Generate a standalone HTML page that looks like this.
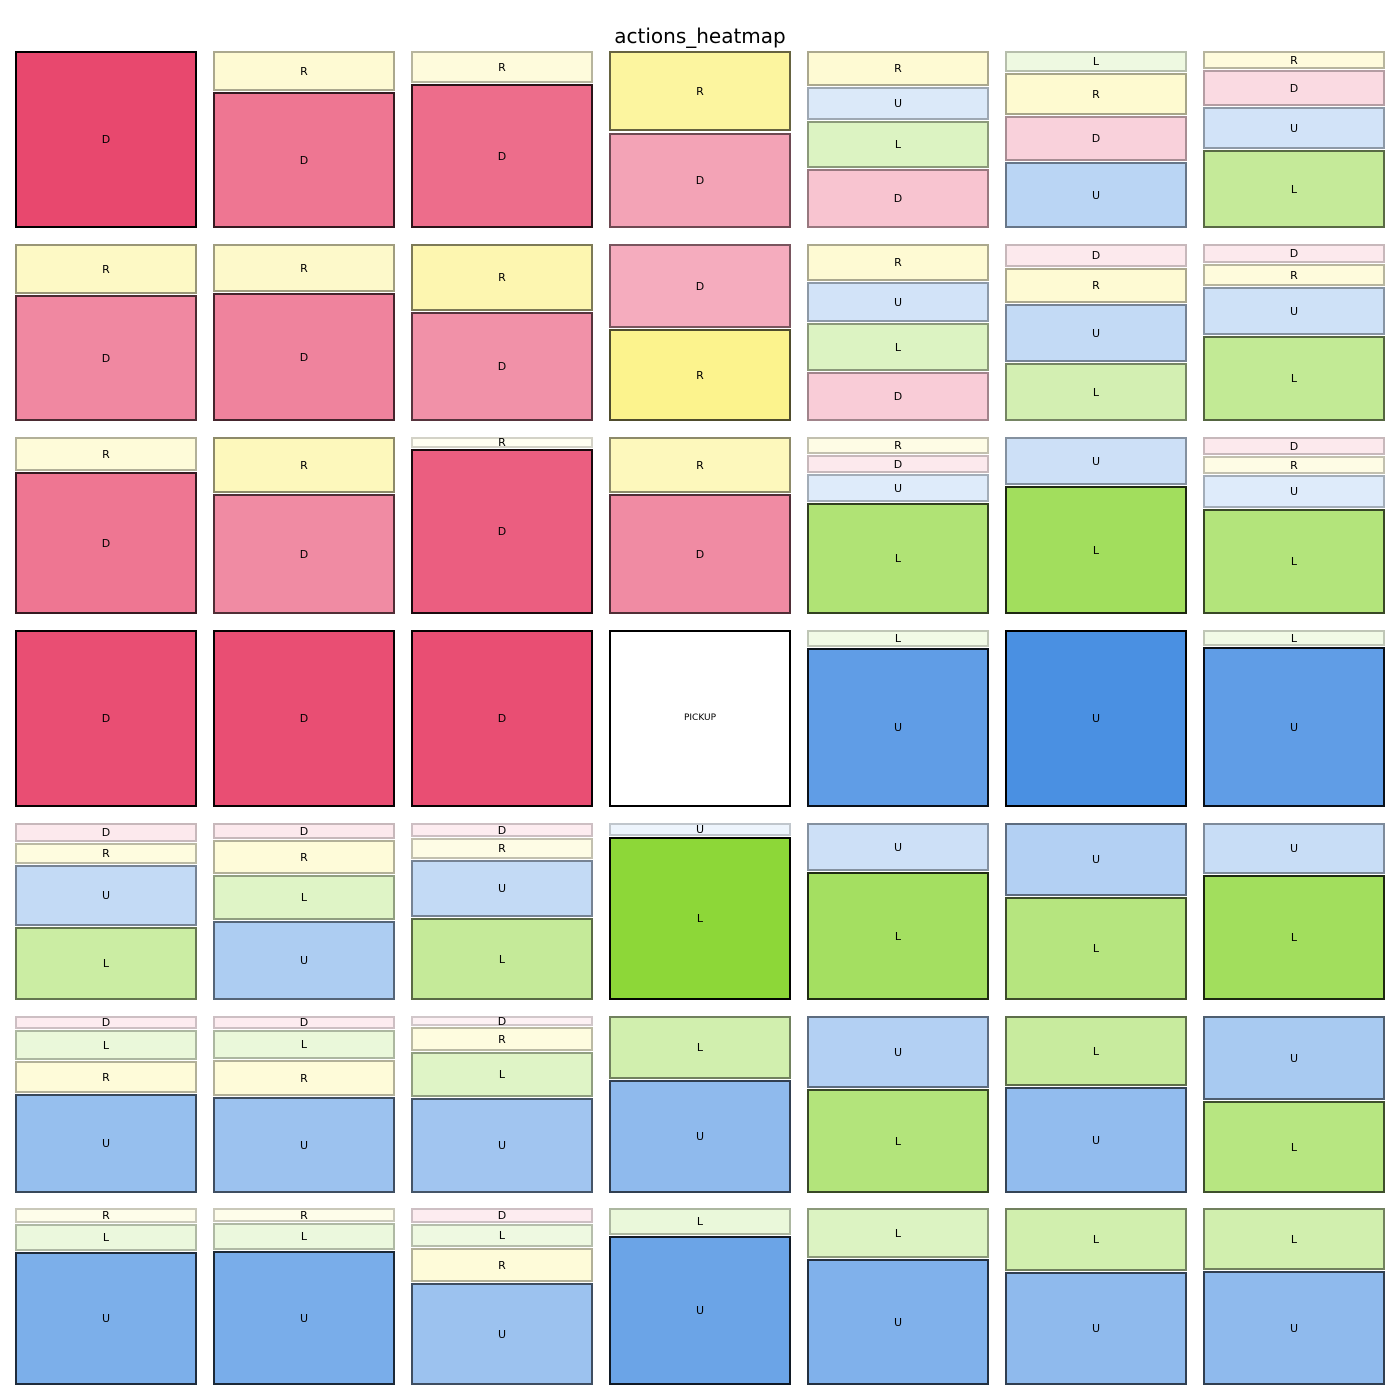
<!DOCTYPE html>
<html><head><meta charset="utf-8"><style>
body{margin:0;width:1400px;height:1400px;background:#fff;position:relative;overflow:hidden;font-family:"DejaVu Sans","Liberation Sans",sans-serif}
.t{position:absolute;left:0;width:1400px;top:24px;text-align:center;font-size:20px;color:#000}
.c{position:absolute;width:182px;height:177px}
.s{position:absolute;left:0;width:182px;box-sizing:border-box;border:2px solid rgba(0,0,0,calc(var(--a) * 0.9 + 0.1));background:rgba(var(--c),var(--a));display:flex;align-items:center;justify-content:center;font-size:11px;color:#000;overflow:visible;line-height:1}
.D{--c:232,72,110}.R{--c:250,236,80}.U{--c:74,144,226}.L{--c:139,214,52}
.P{--c:255,255,255;--a:1}
</style></head><body>
<div class="t">actions_heatmap</div>

<!-- row 0 -->
<div class="c" style="left:15px;top:51px"><div class="s D" style="top:0;height:177px;--a:1">D</div></div>
<div class="c" style="left:213px;top:51px"><div class="s R" style="top:0;height:40px;--a:.25">R</div><div class="s D" style="top:41px;height:136px;--a:.75">D</div></div>
<div class="c" style="left:411px;top:51px"><div class="s R" style="top:0;height:32px;--a:.2">R</div><div class="s D" style="top:33px;height:144px;--a:.8">D</div></div>
<div class="c" style="left:609px;top:51px"><div class="s R" style="top:0;height:80px;--a:.55">R</div><div class="s D" style="top:82px;height:95px;--a:.5">D</div></div>
<div class="c" style="left:807px;top:51px"><div class="s R" style="top:0;height:35px;--a:.25">R</div><div class="s U" style="top:36px;height:33px;--a:.2">U</div><div class="s L" style="top:70px;height:47px;--a:.3">L</div><div class="s D" style="top:118px;height:59px;--a:.32">D</div></div>
<div class="c" style="left:1005px;top:51px"><div class="s L" style="top:0;height:21px;--a:.15">L</div><div class="s R" style="top:22px;height:42px;--a:.27">R</div><div class="s D" style="top:65px;height:45px;--a:.25">D</div><div class="s U" style="top:111px;height:66px;--a:.38">U</div></div>
<div class="c" style="left:1203px;top:51px"><div class="s R" style="top:0;height:18px;--a:.2">R</div><div class="s D" style="top:19px;height:36px;--a:.2">D</div><div class="s U" style="top:56px;height:42px;--a:.25">U</div><div class="s L" style="top:99px;height:78px;--a:.5">L</div></div>

<!-- row 1 -->
<div class="c" style="left:15px;top:244px"><div class="s R" style="top:0;height:50px;--a:.33">R</div><div class="s D" style="top:51px;height:126px;--a:.65">D</div></div>
<div class="c" style="left:213px;top:244px"><div class="s R" style="top:0;height:48px;--a:.3">R</div><div class="s D" style="top:49px;height:128px;--a:.68">D</div></div>
<div class="c" style="left:411px;top:244px"><div class="s R" style="top:0;height:67px;--a:.45">R</div><div class="s D" style="top:68px;height:109px;--a:.6">D</div></div>
<div class="c" style="left:609px;top:244px"><div class="s D" style="top:0;height:84px;--a:.45">D</div><div class="s R" style="top:85px;height:92px;--a:.65">R</div></div>
<div class="c" style="left:807px;top:244px"><div class="s R" style="top:0;height:37px;--a:.25">R</div><div class="s U" style="top:38px;height:40px;--a:.25">U</div><div class="s L" style="top:79px;height:48px;--a:.3">L</div><div class="s D" style="top:128px;height:49px;--a:.28">D</div></div>
<div class="c" style="left:1005px;top:244px"><div class="s D" style="top:0;height:23px;--a:.12">D</div><div class="s R" style="top:24px;height:35px;--a:.25">R</div><div class="s U" style="top:60px;height:58px;--a:.33">U</div><div class="s L" style="top:119px;height:58px;--a:.38">L</div></div>
<div class="c" style="left:1203px;top:244px"><div class="s D" style="top:0;height:19px;--a:.12">D</div><div class="s R" style="top:20px;height:22px;--a:.2">R</div><div class="s U" style="top:43px;height:48px;--a:.27">U</div><div class="s L" style="top:92px;height:85px;--a:.52">L</div></div>

<!-- row 2 -->
<div class="c" style="left:15px;top:437px"><div class="s R" style="top:0;height:34px;--a:.22">R</div><div class="s D" style="top:35px;height:142px;--a:.75">D</div></div>
<div class="c" style="left:213px;top:437px"><div class="s R" style="top:0;height:56px;--a:.38">R</div><div class="s D" style="top:57px;height:120px;--a:.63">D</div></div>
<div class="c" style="left:411px;top:437px"><div class="s R" style="top:0;height:11px;--a:.08">R</div><div class="s D" style="top:12px;height:165px;--a:.88">D</div></div>
<div class="c" style="left:609px;top:437px"><div class="s R" style="top:0;height:56px;--a:.38">R</div><div class="s D" style="top:57px;height:120px;--a:.63">D</div></div>
<div class="c" style="left:807px;top:437px"><div class="s R" style="top:0;height:17px;--a:.15">R</div><div class="s D" style="top:18px;height:18px;--a:.12">D</div><div class="s U" style="top:37px;height:28px;--a:.18">U</div><div class="s L" style="top:66px;height:111px;--a:.68">L</div></div>
<div class="c" style="left:1005px;top:437px"><div class="s U" style="top:0;height:48px;--a:.28">U</div><div class="s L" style="top:49px;height:128px;--a:.8">L</div></div>
<div class="c" style="left:1203px;top:437px"><div class="s D" style="top:0;height:18px;--a:.12">D</div><div class="s R" style="top:19px;height:18px;--a:.15">R</div><div class="s U" style="top:38px;height:33px;--a:.18">U</div><div class="s L" style="top:72px;height:105px;--a:.65">L</div></div>

<!-- row 3 -->
<div class="c" style="left:15px;top:630px"><div class="s D" style="top:0;height:177px;--a:.97">D</div></div>
<div class="c" style="left:213px;top:630px"><div class="s D" style="top:0;height:177px;--a:.97">D</div></div>
<div class="c" style="left:411px;top:630px"><div class="s D" style="top:0;height:177px;--a:.97">D</div></div>
<div class="c" style="left:609px;top:630px"><div class="s P" style="top:0;height:177px;font-size:9px">PICKUP</div></div>
<div class="c" style="left:807px;top:630px"><div class="s L" style="top:0;height:17px;--a:.12">L</div><div class="s U" style="top:18px;height:159px;--a:.88">U</div></div>
<div class="c" style="left:1005px;top:630px"><div class="s U" style="top:0;height:177px;--a:1">U</div></div>
<div class="c" style="left:1203px;top:630px"><div class="s L" style="top:0;height:16px;--a:.12">L</div><div class="s U" style="top:17px;height:160px;--a:.88">U</div></div>

<!-- row 4 -->
<div class="c" style="left:15px;top:823px"><div class="s D" style="top:0;height:19px;--a:.12">D</div><div class="s R" style="top:20px;height:21px;--a:.18">R</div><div class="s U" style="top:42px;height:61px;--a:.33">U</div><div class="s L" style="top:104px;height:73px;--a:.45">L</div></div>
<div class="c" style="left:213px;top:823px"><div class="s D" style="top:0;height:16px;--a:.12">D</div><div class="s R" style="top:17px;height:34px;--a:.22">R</div><div class="s L" style="top:52px;height:45px;--a:.28">L</div><div class="s U" style="top:98px;height:79px;--a:.45">U</div></div>
<div class="c" style="left:411px;top:823px"><div class="s D" style="top:0;height:14px;--a:.1">D</div><div class="s R" style="top:15px;height:21px;--a:.15">R</div><div class="s U" style="top:37px;height:57px;--a:.33">U</div><div class="s L" style="top:95px;height:82px;--a:.5">L</div></div>
<div class="c" style="left:609px;top:823px"><div class="s U" style="top:0;height:13px;--a:.1">U</div><div class="s L" style="top:14px;height:163px;--a:.98">L</div></div>
<div class="c" style="left:807px;top:823px"><div class="s U" style="top:0;height:48px;--a:.28">U</div><div class="s L" style="top:49px;height:128px;--a:.78">L</div></div>
<div class="c" style="left:1005px;top:823px"><div class="s U" style="top:0;height:73px;--a:.42">U</div><div class="s L" style="top:74px;height:103px;--a:.63">L</div></div>
<div class="c" style="left:1203px;top:823px"><div class="s U" style="top:0;height:51px;--a:.3">U</div><div class="s L" style="top:52px;height:125px;--a:.8">L</div></div>

<!-- row 5 -->
<div class="c" style="left:15px;top:1016px"><div class="s D" style="top:0;height:13px;--a:.1">D</div><div class="s L" style="top:14px;height:30px;--a:.18">L</div><div class="s R" style="top:45px;height:32px;--a:.22">R</div><div class="s U" style="top:78px;height:99px;--a:.58">U</div></div>
<div class="c" style="left:213px;top:1016px"><div class="s D" style="top:0;height:13px;--a:.1">D</div><div class="s L" style="top:14px;height:29px;--a:.18">L</div><div class="s R" style="top:44px;height:36px;--a:.22">R</div><div class="s U" style="top:81px;height:96px;--a:.55">U</div></div>
<div class="c" style="left:411px;top:1016px"><div class="s D" style="top:0;height:10px;--a:.08">D</div><div class="s R" style="top:11px;height:24px;--a:.18">R</div><div class="s L" style="top:36px;height:45px;--a:.28">L</div><div class="s U" style="top:82px;height:95px;--a:.52">U</div></div>
<div class="c" style="left:609px;top:1016px"><div class="s L" style="top:0;height:63px;--a:.4">L</div><div class="s U" style="top:64px;height:113px;--a:.62">U</div></div>
<div class="c" style="left:807px;top:1016px"><div class="s U" style="top:0;height:72px;--a:.42">U</div><div class="s L" style="top:73px;height:104px;--a:.65">L</div></div>
<div class="c" style="left:1005px;top:1016px"><div class="s L" style="top:0;height:70px;--a:.48">L</div><div class="s U" style="top:71px;height:106px;--a:.6">U</div></div>
<div class="c" style="left:1203px;top:1016px"><div class="s U" style="top:0;height:84px;--a:.48">U</div><div class="s L" style="top:85px;height:92px;--a:.62">L</div></div>

<!-- row 6 -->
<div class="c" style="left:15px;top:1208px"><div class="s R" style="top:0;height:15px;--a:.12">R</div><div class="s L" style="top:16px;height:27px;--a:.17">L</div><div class="s U" style="top:44px;height:133px;--a:.72">U</div></div>
<div class="c" style="left:213px;top:1208px"><div class="s R" style="top:0;height:14px;--a:.12">R</div><div class="s L" style="top:15px;height:27px;--a:.17">L</div><div class="s U" style="top:43px;height:134px;--a:.74">U</div></div>
<div class="c" style="left:411px;top:1208px"><div class="s D" style="top:0;height:15px;--a:.1">D</div><div class="s L" style="top:16px;height:23px;--a:.15">L</div><div class="s R" style="top:40px;height:34px;--a:.22">R</div><div class="s U" style="top:75px;height:102px;--a:.55">U</div></div>
<div class="c" style="left:609px;top:1208px"><div class="s L" style="top:0;height:27px;--a:.18">L</div><div class="s U" style="top:28px;height:149px;--a:.82">U</div></div>
<div class="c" style="left:807px;top:1208px"><div class="s L" style="top:0;height:50px;--a:.3">L</div><div class="s U" style="top:51px;height:126px;--a:.7">U</div></div>
<div class="c" style="left:1005px;top:1208px"><div class="s L" style="top:0;height:63px;--a:.4">L</div><div class="s U" style="top:64px;height:113px;--a:.62">U</div></div>
<div class="c" style="left:1203px;top:1208px"><div class="s L" style="top:0;height:62px;--a:.4">L</div><div class="s U" style="top:63px;height:114px;--a:.62">U</div></div>
</body></html>
